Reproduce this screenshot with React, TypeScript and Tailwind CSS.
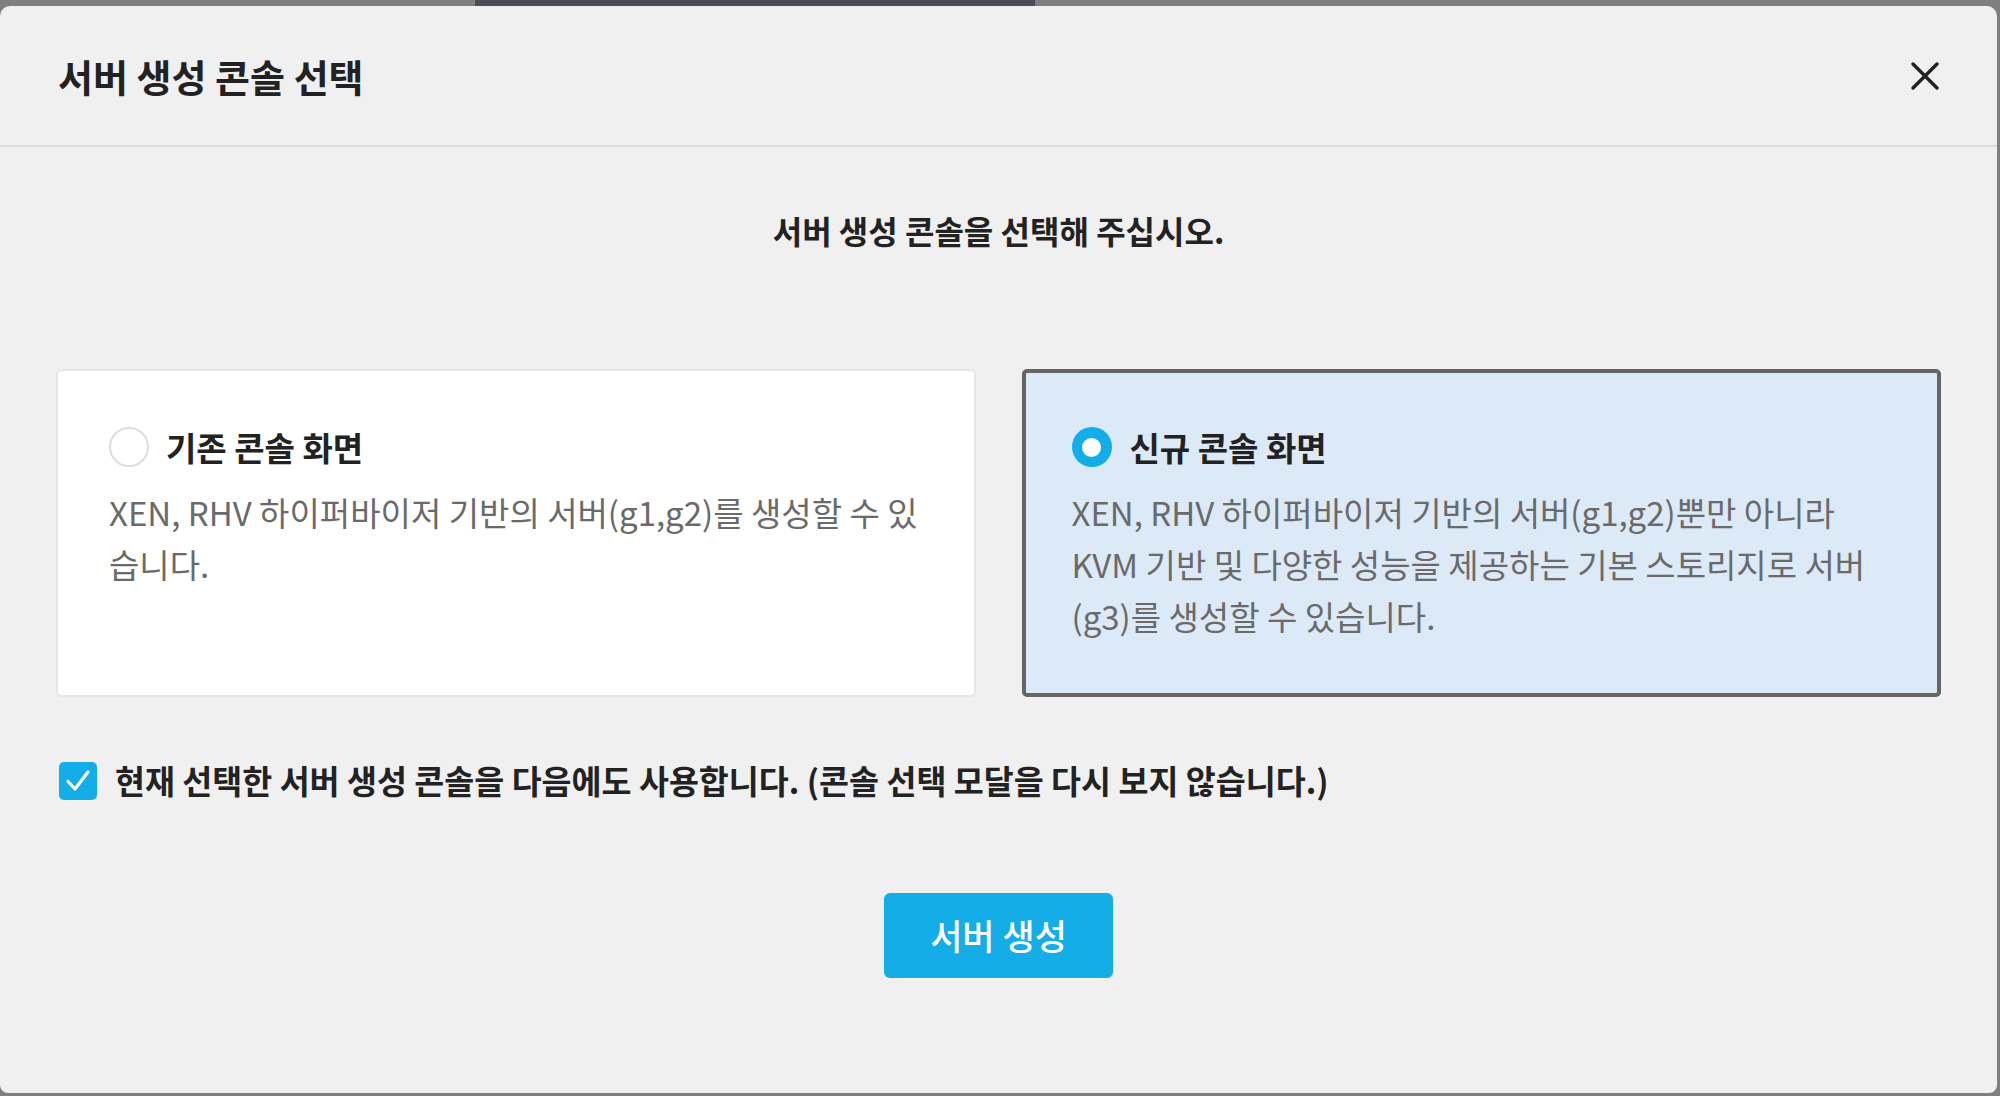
export default function App() {
  return (
    <div
      className="w-[2000px] h-[1096px] bg-[#7f7f7f] flex flex-col overflow-hidden"
      style={{ fontFamily: '"Noto Sans CJK KR", "Noto Sans", sans-serif' }}
    >
      {/* top strip behind the modal */}
      <div className="h-[6px] flex shrink-0">
        <div className="ml-[475px] w-[560px] bg-[#4a4d55]" />
      </div>

      {/* modal */}
      <div className="w-[1997px] h-[1087px] bg-[#f0f0f0] rounded-t-[10px] rounded-b-[8px] flex flex-col">
        <div className="h-[141px] px-[58px] flex items-center justify-between border-b-2 border-[#dcdcdc]">
          <h1 className="text-[38px] font-bold text-[#222] leading-none">서버 생성 콘솔 선택</h1>
          <button className="w-[28px] h-[28px] flex items-center justify-center">
            <svg width="28" height="28" viewBox="0 0 28 28" fill="none">
              <path d="M2 2 L26 26 M26 2 L2 26" stroke="#222" strokeWidth="3.4" strokeLinecap="round" />
            </svg>
          </button>
        </div>

        <div className="px-[56px] flex flex-col">
          <p className="pt-[61px] text-center text-[32px] font-bold text-[#222] leading-[45px]">
            서버 생성 콘솔을 선택해 주십시오.
          </p>

          <div className="mt-[116px] grid grid-cols-2 gap-[46px]">
            {/* legacy console */}
            <div className="bg-white border-2 border-[#e6e6e6] rounded-[5px] pl-[51px] pr-[52px] pt-[56px] pb-[53px]">
              <div className="flex items-center gap-[17px] h-[40px]">
                <span className="w-[40px] h-[40px] rounded-full border-2 border-[#dddddd] bg-white shrink-0" />
                <span className="text-[33px] font-bold text-[#222] leading-none">기존 콘솔 화면</span>
              </div>
              <p className="mt-[19px] text-[33px] text-[#6a6a6a] leading-[52px]">
                XEN, RHV 하이퍼바이저 기반의 서버(g1,g2)를 생성할 수 있습니다.
              </p>
            </div>

            {/* new console (selected) */}
            <div className="bg-[#dce9f6] border-4 border-[#656565] rounded-[5px] pl-[46px] pr-[48px] pt-[54px] pb-[51px]">
              <div className="flex items-center gap-[18px] h-[40px]">
                <span className="w-[40px] h-[40px] rounded-full bg-[#13aee8] flex items-center justify-center shrink-0">
                  <span className="w-[19px] h-[19px] rounded-full bg-white" />
                </span>
                <span className="text-[33px] font-bold text-[#222] leading-none">신규 콘솔 화면</span>
              </div>
              <p className="mt-[19px] text-[33px] text-[#6a6a6a] leading-[52px]">
                XEN, RHV 하이퍼바이저 기반의 서버(g1,g2)뿐만 아니라 KVM 기반 및 다양한 성능을 제공하는 기본 스토리지로 서버(g3)를 생성할 수 있습니다.
              </p>
            </div>
          </div>

          <label className="mt-[61px] flex items-center gap-[18px] h-[45px]">
            <span className="ml-[3px] w-[38px] h-[38px] rounded-[5px] bg-[#13aee8] flex items-center justify-center shrink-0">
              <svg width="26" height="26" viewBox="0 0 26 26" fill="none">
                <path d="M3 13.5 L10 21 L23 4" stroke="#fff" strokeWidth="3.2" strokeLinecap="round" strokeLinejoin="round" />
              </svg>
            </span>
            <span className="text-[32.6px] font-bold text-[#222] leading-none">
              현재 선택한 서버 생성 콘솔을 다음에도 사용합니다. (콘솔 선택 모달을 다시 보지 않습니다.)
            </span>
          </label>

          <div className="mt-[90px] flex justify-center">
            <button className="w-[229px] h-[85px] rounded-[6px] bg-[#14ade8] text-white text-[35px] font-medium">
              서버 생성
            </button>
          </div>
        </div>
      </div>
    </div>
  );
}
